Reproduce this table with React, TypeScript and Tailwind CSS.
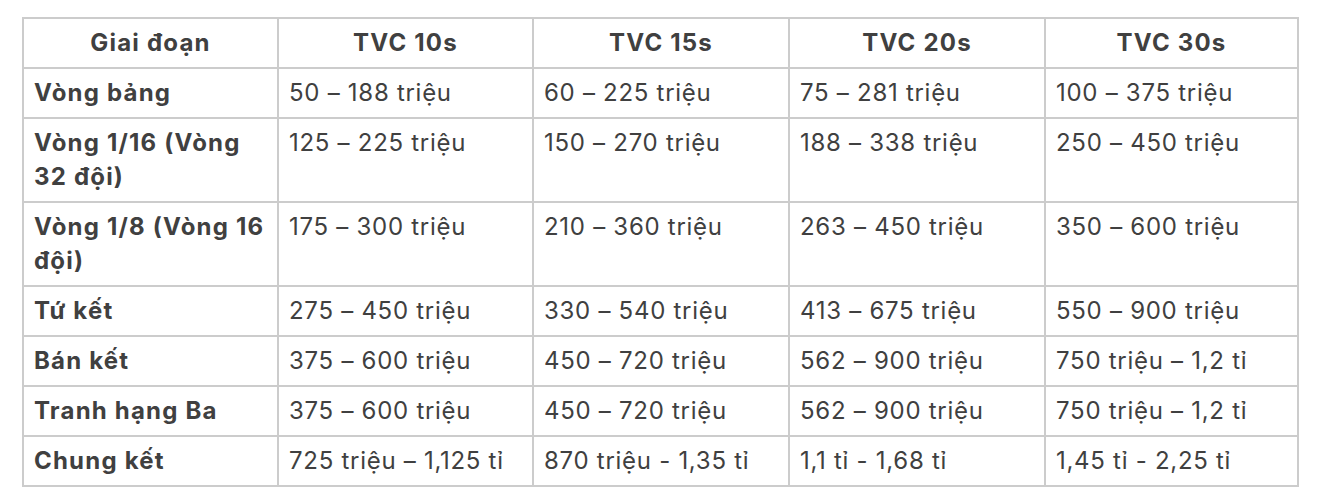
import React from "react";

const rows: [string, string, string, string, string][] = [
  ["Vòng bảng", "50 – 188 triệu", "60 – 225 triệu", "75 – 281 triệu", "100 – 375 triệu"],
  ["Vòng 1/16 (Vòng 32 đội)", "125 – 225 triệu", "150 – 270 triệu", "188 – 338 triệu", "250 – 450 triệu"],
  ["Vòng 1/8 (Vòng 16 đội)", "175 – 300 triệu", "210 – 360 triệu", "263 – 450 triệu", "350 – 600 triệu"],
  ["Tứ kết", "275 – 450 triệu", "330 – 540 triệu", "413 – 675 triệu", "550 – 900 triệu"],
  ["Bán kết", "375 – 600 triệu", "450 – 720 triệu", "562 – 900 triệu", "750 triệu – 1,2 tỉ"],
  ["Tranh hạng Ba", "375 – 600 triệu", "450 – 720 triệu", "562 – 900 triệu", "750 triệu – 1,2 tỉ"],
  ["Chung kết", "725 triệu – 1,125 tỉ", "870 triệu - 1,35 tỉ", "1,1 tỉ - 1,68 tỉ", "1,45 tỉ - 2,25 tỉ"],
];

const headers = ["Giai đoạn", "TVC 10s", "TVC 15s", "TVC 20s", "TVC 30s"];

export default function App() {
  return (
    <div className="w-[1320px] h-[502px] bg-white pt-[17px] pl-[22px]" style={{ fontFamily: "Inter, 'Noto Sans', sans-serif" }}>
      <table className="table-fixed border-collapse w-[1277px] text-[24px] leading-[34px] text-[#404040]">
        <colgroup>
          <col className="w-[255px]" />
          <col className="w-[255px]" />
          <col className="w-[256px]" />
          <col className="w-[256px]" />
          <col />
        </colgroup>
        <thead>
          <tr>
            {headers.map((h) => (
              <th key={h} className="border-2 border-[#cccccc] px-[10px] py-[7px] font-bold tracking-[0.05em] text-center">
                {h}
              </th>
            ))}
          </tr>
        </thead>
        <tbody>
          {rows.map((r) => (
            <tr key={r[0]}>
              {r.map((c, i) => (
                <td
                  key={i}
                  className={`border-2 border-[#cccccc] px-[10px] py-[7px] align-top text-left ${i === 0 ? "font-bold tracking-[0.05em]" : "font-normal tracking-[0.03em]"}`}
                >
                  {c}
                </td>
              ))}
            </tr>
          ))}
        </tbody>
      </table>
    </div>
  );
}
